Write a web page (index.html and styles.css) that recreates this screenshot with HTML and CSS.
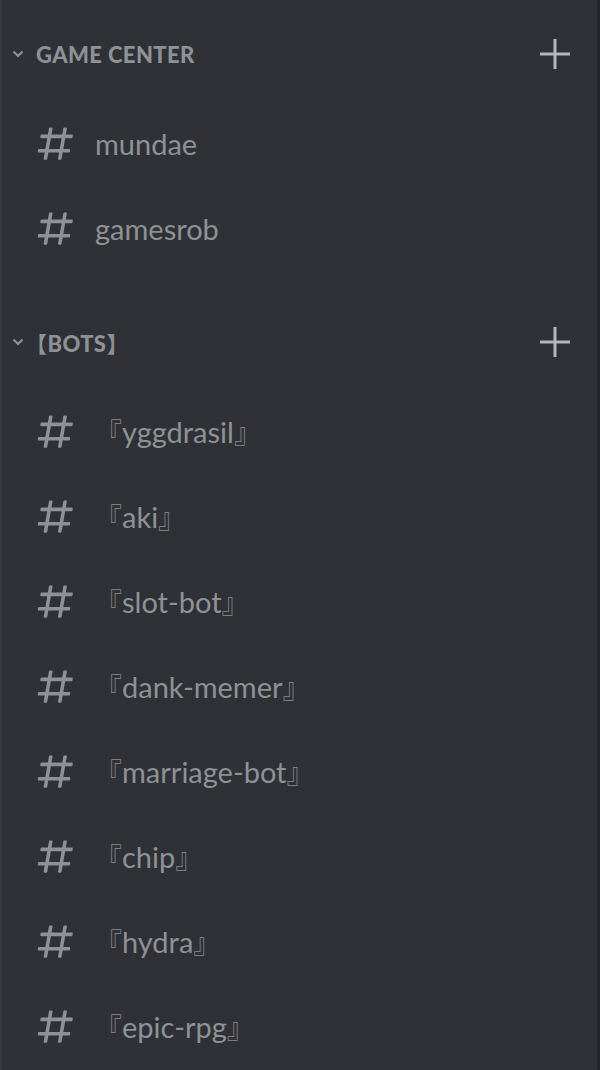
FILE: index.html
```html
<!DOCTYPE html>
<html lang="en">
<head>
    <meta charset="UTF-8">
    <meta name="viewport" content="width=device-width, initial-scale=1.0">
    <title>Channels</title>
    <link rel="stylesheet" href="styles.css">
</head>
<body>
  <div class="sidebar">

    <div class="category">
      <div class="cat-head">
        <svg class="chevron" viewBox="0 0 12 8"><path d="M1.5 1.5 L6 6 L10.5 1.5" fill="none" stroke="currentColor" stroke-width="2.2"/></svg>
        <span class="cat-name">GAME CENTER</span>
        <svg class="plus" viewBox="0 0 32 32"><path d="M16 1 V31 M1 16 H31" stroke="currentColor" stroke-width="3"/></svg>
      </div>
      <div class="channel"><svg class="hash" viewBox="0 0 24 24"><use href="#hash"/></svg><span class="ch-name">mundae</span></div>
      <div class="channel"><svg class="hash" viewBox="0 0 24 24"><use href="#hash"/></svg><span class="ch-name">gamesrob</span></div>
    </div>

    <div class="category">
      <div class="cat-head">
        <svg class="chevron" viewBox="0 0 12 8"><path d="M1.5 1.5 L6 6 L10.5 1.5" fill="none" stroke="currentColor" stroke-width="2.2"/></svg>
        <span class="cat-name"><span class="half">【</span>BOTS<span class="half">】</span></span>
        <svg class="plus" viewBox="0 0 32 32"><path d="M16 1 V31 M1 16 H31" stroke="currentColor" stroke-width="3"/></svg>
      </div>
      <div class="channel"><svg class="hash" viewBox="0 0 24 24"><use href="#hash"/></svg><span class="ch-name"><span class="br">『</span>yggdrasil<span class="br">』</span></span></div>
      <div class="channel"><svg class="hash" viewBox="0 0 24 24"><use href="#hash"/></svg><span class="ch-name"><span class="br">『</span>aki<span class="br">』</span></span></div>
      <div class="channel"><svg class="hash" viewBox="0 0 24 24"><use href="#hash"/></svg><span class="ch-name"><span class="br">『</span>slot-bot<span class="br">』</span></span></div>
      <div class="channel"><svg class="hash" viewBox="0 0 24 24"><use href="#hash"/></svg><span class="ch-name"><span class="br">『</span>dank-memer<span class="br">』</span></span></div>
      <div class="channel"><svg class="hash" viewBox="0 0 24 24"><use href="#hash"/></svg><span class="ch-name"><span class="br">『</span>marriage-bot<span class="br">』</span></span></div>
      <div class="channel"><svg class="hash" viewBox="0 0 24 24"><use href="#hash"/></svg><span class="ch-name"><span class="br">『</span>chip<span class="br">』</span></span></div>
      <div class="channel"><svg class="hash" viewBox="0 0 24 24"><use href="#hash"/></svg><span class="ch-name"><span class="br">『</span>hydra<span class="br">』</span></span></div>
      <div class="channel"><svg class="hash" viewBox="0 0 24 24"><use href="#hash"/></svg><span class="ch-name"><span class="br">『</span>epic-rpg<span class="br">』</span></span></div>
    </div>

  </div>

  <svg width="0" height="0" style="position:absolute">
    <defs>
      <path id="hash" fill="currentColor" fill-rule="evenodd" d="M5.887 21C5.575 21 5.34 20.719 5.394 20.413L6 17H2.595C2.284 17 2.049 16.72 2.103 16.414L2.278 15.414C2.319 15.175 2.527 15 2.77 15H6.35L7.41 9H4.005C3.694 9 3.459 8.72 3.513 8.414L3.688 7.414C3.729 7.175 3.937 7 4.18 7H7.76L8.397 3.413C8.439 3.174 8.647 3 8.889 3H9.873C10.185 3 10.42 3.281 10.366 3.587L9.76 7H15.76L16.397 3.413C16.439 3.174 16.647 3 16.889 3H17.873C18.185 3 18.42 3.281 18.366 3.587L17.76 7H21.165C21.476 7 21.711 7.28 21.657 7.586L21.482 8.586C21.441 8.825 21.233 9 20.99 9H17.41L16.35 15H19.755C20.066 15 20.301 15.28 20.247 15.586L20.072 16.586C20.031 16.825 19.823 17 19.58 17H16L15.363 20.587C15.321 20.826 15.113 21 14.871 21H13.887C13.575 21 13.34 20.719 13.394 20.413L14 17H8L7.363 20.587C7.321 20.826 7.113 21 6.871 21H5.887ZM9.41 9L8.35 15H14.35L15.41 9H9.41Z"/>
    </defs>
  </svg>
</body>
</html>
```

FILE: styles.css
```css
body {
    margin: 0;
    padding: 0;
    background-color: #2f3136;
    font-family: Lato, "Noto Sans", sans-serif;
    color: #8e9297;
}

.sidebar {
    box-sizing: border-box;
    height: 1070px;
    padding-top: 30px;
    border-left: 2px solid #383a40;
    border-right: 3px solid #232428;
    overflow: hidden;
}

.category {
    margin-bottom: 47px;
}

.cat-head {
    display: flex;
    align-items: center;
    height: 48px;
    margin-bottom: 23px;
    padding-left: 10px;
    padding-right: 26px;
}

.chevron {
    width: 12px;
    height: 8px;
    margin-right: 12px;
}

.cat-name {
    flex: 1;
    font-family: Lato, "Noto Sans CJK JP", sans-serif;
    font-weight: 900;
    font-size: 22px;
    letter-spacing: 0.4px;
    color: #8e9297;
}

.half {
    font-family: "Noto Sans CJK JP", sans-serif;
    font-feature-settings: "halt";
    font-weight: bold;
}

.plus {
    width: 32px;
    height: 32px;
    color: #b3b6ba;
}

.channel {
    display: flex;
    align-items: center;
    height: 85px;
    padding-left: 32px;
}

.hash {
    width: 43px;
    height: 43px;
    margin-right: 18px;
    color: #8e9297;
}

.ch-name {
    font-size: 29px;
    font-family: Lato, "Noto Sans CJK JP", sans-serif;
}

.br {
    font-family: "Noto Sans CJK JP", sans-serif;
    font-weight: 300;
    font-size: 27px;
    color: #8a8e93;
}
```
